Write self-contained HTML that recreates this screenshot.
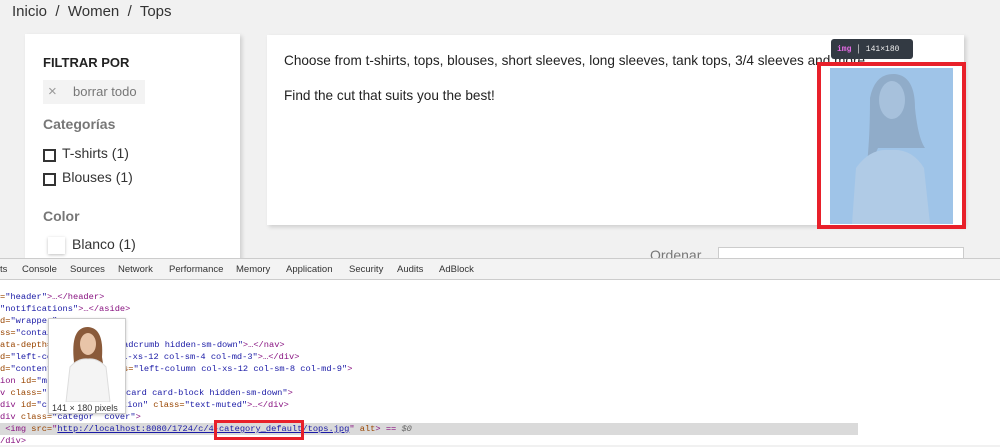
<!DOCTYPE html>
<html><head><meta charset="utf-8"><style>
*{margin:0;padding:0;box-sizing:border-box}
body{width:1000px;height:445px;overflow:hidden;background:#f1f1f1;font-family:"Liberation Sans",sans-serif;position:relative}
.a{position:absolute}
.m{position:absolute;font-family:"Liberation Mono",monospace;font-size:8.7px;white-space:pre;color:#881280;line-height:12px}
.s{color:#1a1aa6}.k{color:#994500}
</style></head><body>
<div class="a" style="left:12px;top:3px;font-size:15px;color:#333">Inicio &nbsp;/&nbsp; Women &nbsp;/&nbsp; Tops</div>
<div class="a" style="left:25px;top:34px;width:215px;height:230px;background:#fff;box-shadow:2px 2px 4px rgba(0,0,0,.15)"></div>
<div class="a" style="left:43px;top:55px;font-size:13px;font-weight:bold;color:#222">FILTRAR POR</div>
<div class="a" style="left:43px;top:80px;width:102px;height:24px;background:#f3f3f3"></div>
<div class="a" style="left:48px;top:83px;font-size:15px;color:#999">×</div>
<div class="a" style="left:73px;top:84px;font-size:13px;color:#777">borrar todo</div>
<div class="a" style="left:43px;top:116px;font-size:14px;color:#777;font-weight:bold">Categorías</div>
<div class="a" style="left:43px;top:149px;width:13px;height:13px;border:2px solid #333"></div>
<div class="a" style="left:62px;top:145px;font-size:14px;color:#333">T-shirts (1)</div>
<div class="a" style="left:43px;top:173px;width:13px;height:13px;border:2px solid #333"></div>
<div class="a" style="left:62px;top:169px;font-size:14px;color:#333">Blouses (1)</div>
<div class="a" style="left:43px;top:208px;font-size:14px;color:#777;font-weight:bold">Color</div>
<div class="a" style="left:48px;top:237px;width:17px;height:17px;background:#fff;box-shadow:0 1px 3px rgba(0,0,0,.25)"></div>
<div class="a" style="left:72px;top:236px;font-size:14px;color:#333">Blanco (1)</div>

<div class="a" style="left:267px;top:35px;width:697px;height:190px;background:#fff;box-shadow:2px 2px 4px rgba(0,0,0,.15)"></div>
<div class="a" style="left:284px;top:53px;font-size:13.6px;color:#222;white-space:nowrap">Choose from t-shirts, tops, blouses, short sleeves, long sleeves, tank tops, 3/4 sleeves and more.</div>
<div class="a" style="left:284px;top:88px;font-size:13.6px;color:#222">Find the cut that suits you the best!</div>
<div class="a" style="left:830px;top:68px;width:123px;height:156px;background:#9fc4e8"></div>
<svg class="a" style="left:830px;top:68px" width="123" height="156"><path d="M40 30 Q45 5 65 6 Q85 8 85 40 Q88 70 95 80 L70 80 L48 80 Q38 100 42 130 L35 110 Q40 80 40 30Z" fill="#90acc9"/><ellipse cx="62" cy="32" rx="13" ry="19" fill="#a7c1dc"/><path d="M22 156 L26 100 Q40 80 60 82 Q82 80 94 100 L100 156Z" fill="#b0cbe6"/></svg>
<div class="a" style="left:817px;top:62px;width:149px;height:167px;border:4px solid #e8202a"></div>
<div class="a" style="left:831px;top:39px;width:82px;height:20px;background:#333a43;border-radius:3px;font-size:8px;color:#eee;padding:6px 6px;font-family:'Liberation Mono',monospace;white-space:nowrap;overflow:hidden"><span style="color:#e66ce6;font-weight:bold">img</span> │ 141×180</div>
<div class="a" style="left:650px;top:247px;font-size:14px;color:#777">Ordenar</div>
<div class="a" style="left:718px;top:247px;width:246px;height:20px;background:#fff;border:1px solid #ccc"></div>

<div class="a" style="left:0;top:258px;width:1000px;height:187px;background:#fff;border-top:1px solid #ccc"></div>
<div class="a" style="left:0;top:259px;width:1000px;height:21px;background:#f3f3f3;border-bottom:1px solid #ccc"></div>
<div class="a" style="left:0;top:264px;font-size:9.5px;color:#333;white-space:nowrap">
<span style="position:absolute;left:0">ts</span><span style="position:absolute;left:22px">Console</span><span style="position:absolute;left:70px">Sources</span><span style="position:absolute;left:118px">Network</span><span style="position:absolute;left:169px">Performance</span><span style="position:absolute;left:236px">Memory</span><span style="position:absolute;left:286px">Application</span><span style="position:absolute;left:349px">Security</span><span style="position:absolute;left:397px">Audits</span><span style="position:absolute;left:439px">AdBlock</span></div>
<div class="a" style="left:0;top:423px;width:858px;height:12px;background:#dadada"></div>

<div class="m" style="left:0;top:291px"><span class="k">=</span><span class="s">"header"</span>&gt;…&lt;/header&gt;
<span class="s">"notifications"</span>&gt;…&lt;/aside&gt;
<span class="k">d=</span><span class="s">"wrapper"</span>
<span class="k">ss=</span><span class="s">"contai</span>
<span class="k">ata-depth=</span>
<span class="k">d=</span><span class="s">"left-co</span>
<span class="k">d=</span><span class="s">"content</span>
ion <span class="k">id=</span><span class="s">"m</span>
v <span class="k">class=</span><span class="s">"</span>
div <span class="k">id=</span><span class="s">"c</span>
div <span class="k">class=</span><span class="s">"categor  cover"</span>&gt;
 &lt;img <span class="k">src=</span>"<span style="color:#1a1aa6;text-decoration:underline">http://localhost:8080/1724/c/4-category_default/tops.jpg</span>" <span class="k">alt</span>&gt; == <span style="color:#666;font-style:italic">$0</span>
/div&gt;</div>
<div class="m" style="left:123px;top:339px"><span class="s">adcrumb hidden-sm-down"</span>&gt;…&lt;/nav&gt;</div>
<div class="m" style="left:117px;top:351px"><span class="s">ol-xs-12 col-sm-4 col-md-3"</span>&gt;…&lt;/div&gt;</div>
<div class="m" style="left:123px;top:363px"><span class="k">s=</span><span class="s">"left-column col-xs-12 col-sm-8 col-md-9"</span>&gt;</div>
<div class="m" style="left:126px;top:387px"><span class="s">card card-block hidden-sm-down"</span>&gt;</div>
<div class="m" style="left:122px;top:399px"><span class="s">tion"</span> <span class="k">class=</span><span class="s">"text-muted"</span>&gt;…&lt;/div&gt;</div>
<div class="a" style="left:214px;top:420px;width:90px;height:20px;border:3px solid #e8202a"></div>
<div class="a" style="left:48px;top:318px;width:78px;height:96px;background:#fff;border:1px solid #ccc;box-shadow:0 1px 3px rgba(0,0,0,.2)"></div>
<svg class="a" style="left:56px;top:322px" width="62" height="80"><path d="M18 40 Q14 5 32 5 Q48 6 46 35 L48 48 L16 48Z" fill="#8a5a3a"/><ellipse cx="32" cy="22" rx="8" ry="11" fill="#e8c4a8"/><path d="M10 80 L14 45 Q22 36 32 37 Q42 36 50 45 L54 80Z" fill="#f4f4f4" stroke="#ddd"/></svg>
<div class="a" style="left:52px;top:403px;font-size:9px;color:#333">141 × 180 pixels</div>
</body></html>
